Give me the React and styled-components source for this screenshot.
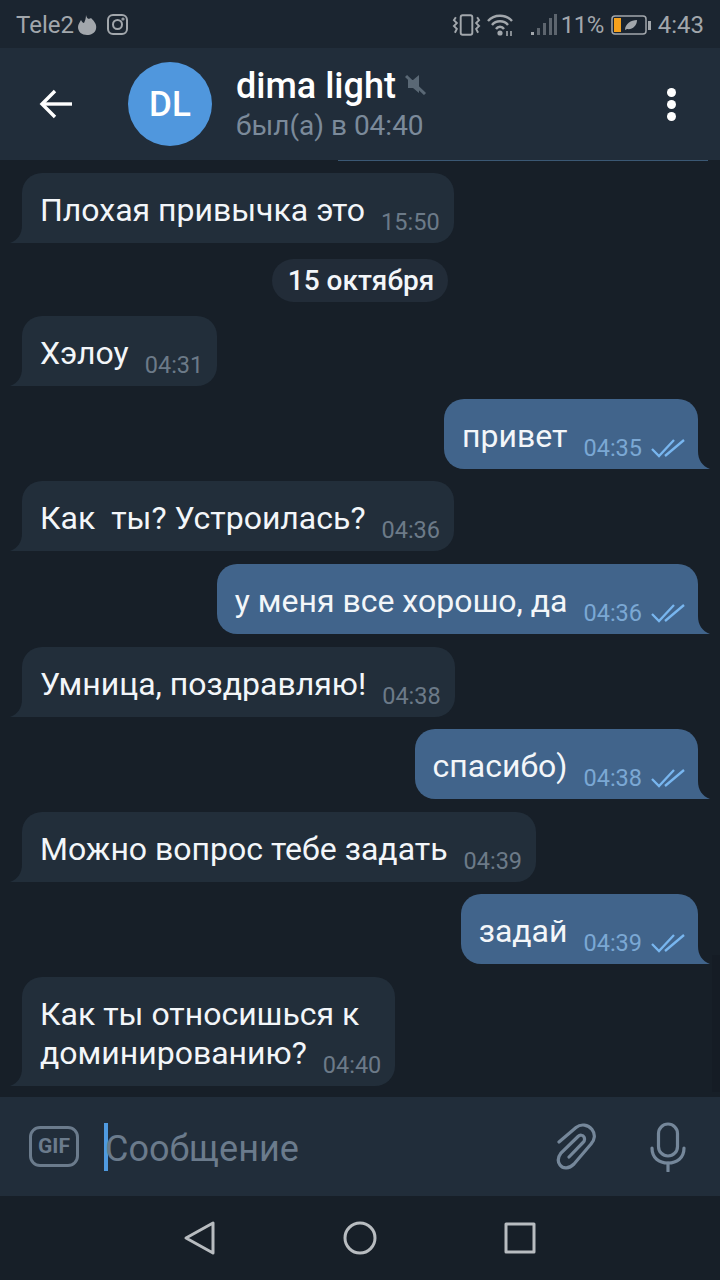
import React from "react";
import styled, { createGlobalStyle } from "styled-components";

const GlobalStyle = createGlobalStyle`
  html, body {
    margin: 0;
    padding: 0;
    background: #171f28;
  }
  * {
    box-sizing: border-box;
  }
`;

const Screen = styled.div`
  width: 720px;
  height: 1280px;
  display: flex;
  flex-direction: column;
  overflow: hidden;
  background: #171f28;
  font-family: Roboto, "Noto Sans", sans-serif;
`;

const StatusBar = styled.div`
  height: 48px;
  padding: 2px 16px 0;
  display: flex;
  align-items: center;
  justify-content: space-between;
  background: #1b2530;
  color: #a2a7ac;
  font-size: 24px;
`;

const StatusGroup = styled.div`
  display: flex;
  align-items: center;
  gap: ${(p) => p.$gap || 0}px;
`;

const Header = styled.header`
  height: 112px;
  flex-shrink: 0;
  display: flex;
  align-items: center;
  background: #212d3a;
  padding: 0 44px 0 38px;
`;

const BackButton = styled.div`
  width: 90px;
  display: flex;
  align-items: center;
`;

const Avatar = styled.div`
  width: 84px;
  height: 84px;
  border-radius: 50%;
  background: #5097dd;
  color: #fff;
  display: flex;
  align-items: center;
  justify-content: center;
  font-size: 35px;
  font-weight: 500;
`;

const Peer = styled.div`
  margin-left: 24px;
  flex: 1;
  display: flex;
  flex-direction: column;
  gap: 2px;
  padding-top: 2px;
`;

const PeerName = styled.div`
  color: #fff;
  font-size: 36px;
  line-height: 40px;
  font-weight: 500;
  display: flex;
  align-items: center;
  gap: 9px;
`;

const MuteIcon = styled.svg`
  margin-bottom: 4px;
`;

const PeerStatus = styled.div`
  color: #7b8a9a;
  font-size: 28px;
  line-height: 36px;
`;

const Dots = styled.div`
  display: flex;
  flex-direction: column;
  gap: 3px;
  span {
    width: 9px;
    height: 9px;
    border-radius: 50%;
    background: #fff;
  }
`;

const Messages = styled.main`
  position: relative;
  flex: 1;
  min-height: 0;
  display: flex;
  flex-direction: column;
  overflow: hidden;
`;

const PeekEdge = styled.div`
  height: 1px;
  margin: 0 12px 12px 338px;
  background: #3b5874;
`;

const ScrollShade = styled.div`
  position: absolute;
  top: 795px;
  right: 0;
  bottom: 5px;
  width: 8px;
  background: #151c25;
`;

const Row = styled.div`
  display: flex;
  justify-content: ${(p) => (p.$out ? "flex-end" : "flex-start")};
  padding: ${(p) => (p.$out ? "0 22px 0 0" : "0 0 0 22px")};
  margin-bottom: ${(p) => p.$after ?? 12.625}px;
`;

const Bubble = styled.div`
  position: relative;
  padding: 18px ${(p) => (p.$out ? 12 : 14)}px 13px 18px;
  background: ${(p) => (p.$out ? "#41648b" : "#222e3a")};
  border-radius: ${(p) => (p.$out ? "20px 20px 0 20px" : "20px 20px 20px 0")};
  color: #f3f6f9;
  font-size: 32px;
  line-height: 39px;
  white-space: pre;
`;

const LeadLine = styled.div`
  display: block;
`;

const Tail = styled.svg`
  position: absolute;
  bottom: 0;
  width: 12px;
  height: 18px;
  ${(p) => (p.$out ? "right: -12px;" : "left: -12px;")}
`;

const Meta = styled.span`
  margin-left: 16px;
  font-size: 23.5px;
  line-height: 0;
  vertical-align: -9px;
  color: ${(p) => (p.$out ? "#7ba8d4" : "#6c7a88")};
`;

const Ticks = styled.svg`
  width: 36px;
  height: 20px;
  margin: -10px 0 -10px 8px;
  vertical-align: 8px;
`;

const DatePill = styled.div`
  align-self: center;
  height: 43px;
  margin: 4px 0 14px;
  padding: 0 14px 0 16px;
  display: flex;
  align-items: center;
  border-radius: 22px;
  background: #222c38;
  color: #f3f6f9;
  font-size: 28px;
  font-weight: 500;
`;

const Composer = styled.div`
  height: 99px;
  flex-shrink: 0;
  display: flex;
  align-items: center;
  padding: 0 34px 0 29px;
  background: #212d3a;
`;

const GifBadge = styled.div`
  width: 50px;
  height: 41px;
  border: 3px solid #6b7b8c;
  border-radius: 11px;
  color: #6b7b8c;
  font-size: 21px;
  font-weight: 700;
  display: flex;
  align-items: center;
  justify-content: center;
  margin-top: -1px;
`;

const InputField = styled.div`
  flex: 1;
  margin-left: 25px;
  display: flex;
  align-items: center;
  color: #6b7b8c;
  font-size: 36px;
`;

const Caret = styled.span`
  width: 4px;
  height: 48px;
  margin-right: -3px;
  background: #4f9ae0;
`;

const Placeholder = styled.span`
  padding-top: 4px;
`;

const ComposerIcon = styled.svg`
  flex-shrink: 0;
  fill: none;
  stroke: #75879a;
  stroke-width: 3.2;
  stroke-linecap: round;
  margin-left: ${(p) => p.$left || 0}px;
`;

const NavBar = styled.nav`
  height: 84px;
  flex-shrink: 0;
  display: grid;
  grid-template-columns: repeat(3, 160px);
  justify-content: center;
  align-items: center;
  justify-items: center;
  background: #171f28;
`;

const NavIcon = styled.svg`
  width: 36px;
  height: 36px;
  fill: none;
  stroke: #b8bcc0;
  stroke-width: 3;
  stroke-linejoin: round;
`;

const chat = [
  { kind: "in", text: "Хэлоу", time: "04:31" },
  { kind: "out", text: "привет", time: "04:35" },
  { kind: "in", text: "Как  ты? Устроилась?", time: "04:36" },
  { kind: "out", text: "у меня все хорошо, да", time: "04:36" },
  { kind: "in", text: "Умница, поздравляю!", time: "04:38" },
  { kind: "out", text: "спасибо)", time: "04:38" },
  { kind: "in", text: "Можно вопрос тебе задать", time: "04:39" },
  { kind: "out", text: "задай", time: "04:39" },
];

function BubbleTail({ out }) {
  const color = out ? "#41648b" : "#222e3a";
  return (
    <Tail $out={out} viewBox="0 0 12 18">
      {out ? (
        <path d="M0 0 C0 9 4 15 12 18 L0 18 Z" fill={color} />
      ) : (
        <path d="M12 0 C12 9 8 15 0 18 L12 18 Z" fill={color} />
      )}
    </Tail>
  );
}

function Message({ kind, text, lead, time, after }) {
  const out = kind === "out";
  return (
    <Row $out={out} $after={after}>
      <Bubble $out={out}>
        {lead && <LeadLine>{lead}</LeadLine>}
        {text}
        <Meta $out={out}>
          {time}
          {out && (
            <Ticks viewBox="0 0 36 20" fill="none" stroke="#78b6ef" strokeWidth="2.3">
              <path d="M2 11 L9 18 L24 2" />
              <path d="M15 18 L34 2" />
            </Ticks>
          )}
        </Meta>
        <BubbleTail out={out} />
      </Bubble>
    </Row>
  );
}

function App() {
  return (
    <Screen>
      <GlobalStyle />
      <StatusBar>
        <StatusGroup $gap={3}>
          Tele2
          <svg width="20" height="22" viewBox="0 0 20 22">
            <path
              d="M9 1 C10 6 13 5 14 4 C18 8 20 11 19 15 C18 19 14 21 10 21 C5 21 1 18 1 13 C1 10 3 8 4 6 C5 8 6 9 7 9 C8 7 9 4 9 1 Z"
              fill="#a2a7ac"
            />
          </svg>
          <svg
            width="22"
            height="22"
            viewBox="0 0 22 22"
            fill="none"
            stroke="#a2a7ac"
            strokeWidth="2"
            style={{ marginLeft: 7 }}
          >
            <rect x="1" y="1" width="19" height="19" rx="5" />
            <circle cx="10.5" cy="10.5" r="4.5" />
            <circle cx="16" cy="5" r="0.6" />
          </svg>
        </StatusGroup>
        <StatusGroup>
          <svg
            width="29"
            height="24"
            viewBox="0 0 30 24"
            fill="none"
            stroke="#a2a7ac"
            strokeWidth="2"
          >
            <rect x="9" y="2" width="12" height="20" rx="2" />
            <path d="M4 4 L2 7 L5 10 L2 13 L5 16 L3 20" />
            <path d="M26 4 L28 7 L25 10 L28 13 L25 16 L27 20" />
          </svg>
          <svg
            width="28"
            height="24"
            viewBox="0 0 28 24"
            fill="none"
            stroke="#a2a7ac"
            strokeWidth="2.4"
            style={{ marginLeft: 6 }}
          >
            <path d="M1 8 C7 1 19 1 25 8" />
            <path d="M5 12 C9 7 17 7 21 12" />
            <path d="M9 16 C11 13 15 13 17 16" />
            <circle cx="13" cy="20" r="1.4" fill="#a2a7ac" />
            <path d="M20 18 V23 M24 18 V23" strokeWidth="1.6" />
          </svg>
          <svg width="26" height="24" viewBox="0 0 26 24" style={{ marginLeft: 16 }}>
            <rect x="0" y="19" width="3" height="3" fill="#a2a7ac" />
            <rect x="6" y="15" width="3" height="7" fill="#5d656e" />
            <rect x="12" y="10" width="3" height="12" fill="#5d656e" />
            <rect x="18" y="5" width="3" height="17" fill="#5d656e" />
            <rect x="23" y="1" width="3" height="21" fill="#5d656e" />
          </svg>
          <span style={{ marginLeft: 4, letterSpacing: -0.5 }}>11%</span>
          <svg width="40" height="22" viewBox="0 0 40 22" style={{ marginLeft: 7 }}>
            <rect x="1" y="2" width="34" height="18" rx="3" fill="none" stroke="#a2a7ac" strokeWidth="1.5" />
            <rect x="3" y="4" width="7" height="14" fill="#f5a11c" />
            <path d="M14 16 C14 10 20 6 26 6 C26 12 21 16 16 15 Z" fill="#a2a7ac" />
            <rect x="37" y="7" width="3" height="9" fill="#a2a7ac" />
          </svg>
          <span style={{ marginLeft: 7 }}>4:43</span>
        </StatusGroup>
      </StatusBar>

      <Header>
        <BackButton>
          <svg width="36" height="32" viewBox="0 0 36 32" fill="none" stroke="#fff" strokeWidth="3.4">
            <path d="M34 16 H4" />
            <path d="M17 3 L4 16 L17 29" />
          </svg>
        </BackButton>
        <Avatar>DL</Avatar>
        <Peer>
          <PeerName>
            dima light
            <MuteIcon width="22" height="22" viewBox="0 0 22 22">
              <path d="M3 7 H8 L14 2 V20 L8 15 H3 Z" fill="#5a6875" />
              <path d="M1 3 L20 21" stroke="#5a6875" strokeWidth="3" />
            </MuteIcon>
          </PeerName>
          <PeerStatus>был(а) в 04:40</PeerStatus>
        </Peer>
        <Dots>
          <span />
          <span />
          <span />
        </Dots>
      </Header>

      <Messages>
        <PeekEdge />
        <ScrollShade />
        <Message kind="in" text="Плохая привычка это" time="15:50" after={12} />
        <DatePill>15 октября</DatePill>
        {chat.map((m) => (
          <Message key={m.text} {...m} />
        ))}
        <Message
          kind="in"
          lead="Как ты относишься к"
          text="доминированию?"
          time="04:40"
          after={0}
        />
      </Messages>

      <Composer>
        <GifBadge>GIF</GifBadge>
        <InputField>
          <Caret />
          <Placeholder>Сообщение</Placeholder>
        </InputField>
        <ComposerIcon width="42" height="48" viewBox="0 0 42 48">
          <path d="M3 19 L20 4.5 C25 0.5 32 1.5 36 6.5 C39.5 11 39 17 35 21 L18 41 C13 46 7 46 4 42 C1 38 2 34 5 30 L22 13.5 C24 11.5 27 12 28 14 C29 16 28.5 18 27 19.5 L13 34" />
        </ComposerIcon>
        <ComposerIcon $left={52} width="36" height="50" viewBox="0 0 36 50">
          <rect x="8.5" y="2" width="19" height="32" rx="9.5" />
          <path d="M2 26 C2 36 9 41 18 41 C27 41 34 36 34 26" />
          <path d="M18 41 V49" />
        </ComposerIcon>
      </Composer>

      <NavBar>
        <NavIcon viewBox="0 0 36 36">
          <path d="M31 3 V33 L4 18 Z" />
        </NavIcon>
        <NavIcon viewBox="0 0 36 36">
          <circle cx="18" cy="18" r="15" />
        </NavIcon>
        <NavIcon viewBox="0 0 36 36">
          <rect x="4" y="4" width="28" height="28" />
        </NavIcon>
      </NavBar>
    </Screen>
  );
}

export default App;
